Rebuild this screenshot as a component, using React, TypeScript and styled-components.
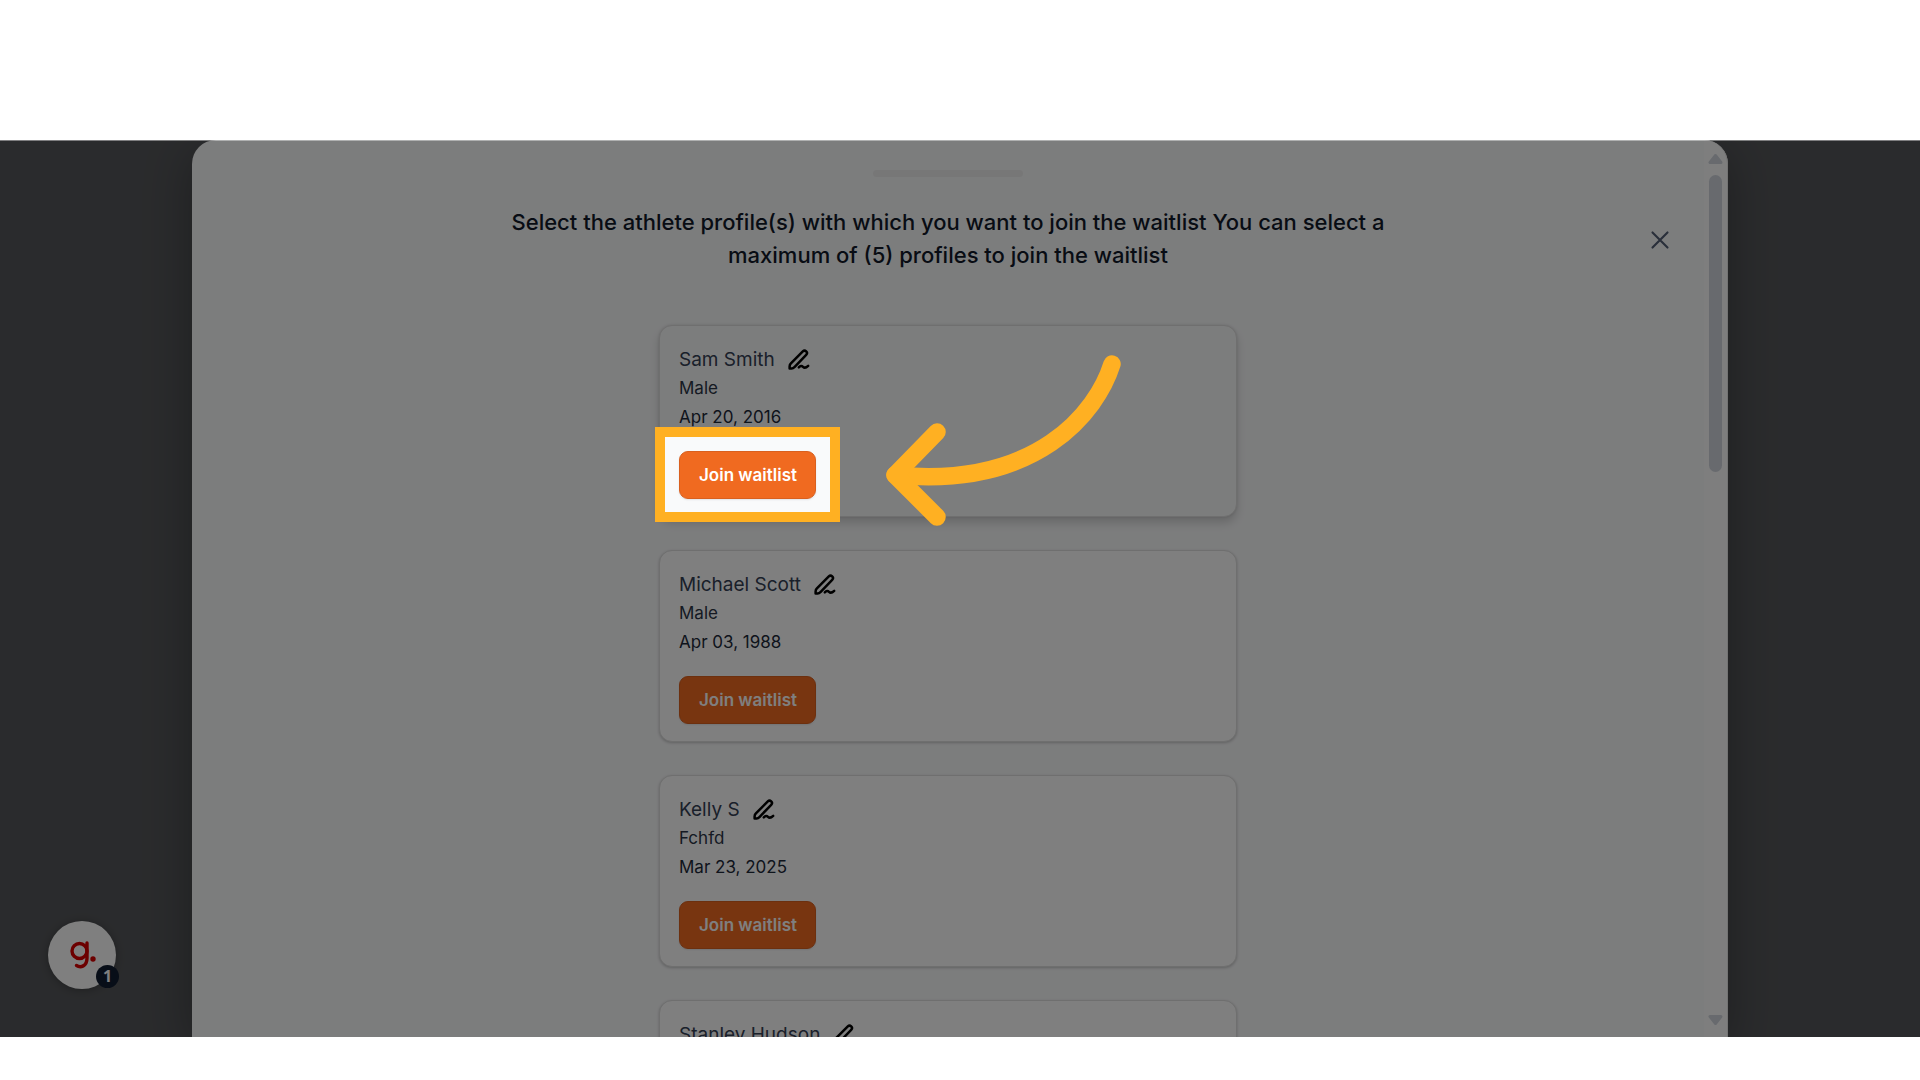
import React from "react";
import styled, { createGlobalStyle } from "styled-components";

const GlobalStyle = createGlobalStyle`
  *, *::before, *::after { box-sizing: border-box; }
  body {
    margin: 0;
    background: #ffffff;
    font-family: Inter, "Liberation Sans", sans-serif;
  }
`;

const Page = styled.div`
  display: flex;
  flex-direction: column;
  height: 100vh;
  padding: 140px 0 43px;
`;

const Stage = styled.main`
  position: relative;
  isolation: isolate;
  flex: 1;
  min-height: 0;
  display: flex;
  justify-content: center;
  overflow: hidden;
  background: #55575a;

  &::after {
    content: "";
    position: absolute;
    inset: 0 0 auto;
    z-index: 3;
    height: 1px;
    background: rgba(255, 255, 255, 0.4);
  }
`;

const Panel = styled.section`
  display: flex;
  width: 80%;
  border-radius: 24px 24px 0 0;
  background: #f9fafb;
  box-shadow: 0 10px 48px rgba(0, 0, 0, 0.3);
`;

const Content = styled.div`
  flex: 1;
  min-width: 0;
  display: flex;
  flex-direction: column;
  align-items: center;
  padding-top: 30px;
`;

const Handle = styled.div`
  flex: none;
  width: 150px;
  height: 7px;
  border-radius: 4px;
  background: #efefef;
`;

const Header = styled.header`
  align-self: stretch;
  display: grid;
  grid-template-columns: 1fr minmax(0, 920px) 1fr;
  align-items: center;
  padding: 29px 0 53px;
`;

const Title = styled.h1`
  grid-column: 2;
  margin: 0;
  color: #101828;
  font-size: 22px;
  font-weight: 500;
  line-height: 33px;
  text-align: center;
`;

const IconButton = styled.button`
  display: flex;
  padding: 0;
  border: 0;
  background: none;
  color: #000000;
  cursor: pointer;
`;

const CloseButton = styled(IconButton)`
  justify-self: end;
  margin-right: 29px;
  padding-top: 2px;
  color: #535f75;
`;

const Cards = styled.ul`
  display: flex;
  flex-direction: column;
  gap: 33px;
  width: 578px;
  margin: 0;
  padding: 0;
  list-style: none;
`;

const Card = styled.li<{ $active?: boolean }>`
  display: flex;
  flex-direction: column;
  align-items: flex-start;
  padding: 19px 19px 17px;
  border: 1px solid #dedede;
  border-radius: 13px;
  background: ${(p) => (p.$active ? "#f9fafb" : "#ffffff")};
  box-shadow: ${(p) =>
    p.$active
      ? "0 6px 10px rgba(0, 0, 0, 0.16), 0 0 3px rgba(0, 0, 0, 0.12)"
      : "0 1px 3px rgba(0, 0, 0, 0.22)"};
`;

const NameRow = styled.div`
  display: flex;
  align-items: center;
  gap: 13px;
  height: 29px;
`;

const Name = styled.h2`
  margin: 0;
  color: #344054;
  font-size: 19px;
  font-weight: 400;
  line-height: 29px;
`;

const Detail = styled.p<{ $strong?: boolean }>`
  margin: 0;
  color: ${(p) => (p.$strong ? "#1d2939" : "#2b3546")};
  font-size: 17px;
  line-height: 29px;
`;

const Action = styled.div`
  position: relative;
  margin-top: 19px;
`;

const JoinButton = styled.button`
  display: block;
  height: 48px;
  padding: 0 18px 0 19px;
  border: 1px solid #d9601f;
  border-radius: 9px;
  background: #f06a20;
  color: #ffffff;
  font: 600 17px/29px Inter, "Liberation Sans", sans-serif;
  box-shadow: 0 1px 2px rgba(16, 24, 40, 0.1);
  cursor: pointer;
`;

/* The spread shadow dims everything outside the highlighted control. */
const Spotlight = styled.div`
  position: absolute;
  inset: -24px -24px -23px;
  z-index: 1;
  border: 10px solid #ffb022;
  box-shadow: 0 0 0 3000px rgba(0, 0, 0, 0.5);
  pointer-events: none;
`;

const Arrow = styled.svg`
  position: absolute;
  top: -96px;
  left: 204px;
  z-index: 2;
  pointer-events: none;
`;

const Scrollbar = styled.div`
  flex: none;
  display: flex;
  flex-direction: column;
  align-items: center;
  width: 24px;
  padding: 13px 0 11px;
  border-right: 1px solid #e6e6e6;
  border-radius: 0 24px 0 0;
  background: #fdfdfd;
`;

const Thumb = styled.div`
  width: 13px;
  height: 34%;
  margin: 10px 0 auto;
  border-radius: 7px;
  background: #d0d5dd;
`;

const Launcher = styled.button`
  position: absolute;
  bottom: 48px;
  left: 48px;
  width: 68px;
  height: 68px;
  padding: 0;
  border: 0;
  border-radius: 50%;
  background: #ffffff;
  box-shadow: 0 1px 8px rgba(0, 0, 0, 0.3);
  cursor: pointer;
`;

const Badge = styled.span`
  position: absolute;
  right: -3px;
  bottom: 1px;
  width: 23px;
  height: 23px;
  border-radius: 50%;
  background: #101c30;
  color: #ffffff;
  font: 700 16px/22px "Open Sans", "Noto Sans", sans-serif;
  text-align: center;
`;

const EditIcon = () => (
  <svg width="22" height="22" viewBox="0 0 22 22" fill="none" stroke="currentColor" strokeWidth="2.5" strokeLinecap="round" strokeLinejoin="round" aria-hidden="true">
    <path d="M1.600 19.400v-2c0-1.300.4-2.200 1.300-3.100L14.800 2.400a2.400 2.400 0 0 1 3.400 3.400L6.700 17.800c-.9.9-1.900 1.600-3.100 1.600z" />
    <path d="M10.800 18.400c1.600-1.700 3-1.800 4.200-.6s3 1.100 5.200-1" />
  </svg>
);

const CloseIcon = () => (
  <svg width="30" height="30" viewBox="0 0 24 24" fill="none" stroke="currentColor" strokeWidth="1.700" strokeLinecap="round" aria-hidden="true">
    <path d="M6 6l12 12M18 6L6 18" />
  </svg>
);

const ScrollArrow = ({ down }: { down?: boolean }) => (
  <svg width="15" height="12" viewBox="0 0 15 12" fill="#d0d5dd" stroke="#d0d5dd" strokeWidth="3" strokeLinejoin="round" aria-hidden="true">
    <path d={down ? "M2 2.500h11L7.500 9.500z" : "M2 9.500h11L7.500 2.500z"} />
  </svg>
);

const BrandMark = () => (
  <svg width="68" height="68" viewBox="0 0 68 68" fill="none" stroke="#d90000" strokeWidth="3.400" strokeLinecap="round" aria-hidden="true">
    <circle cx="31.500" cy="30" r="7.500" />
    <path d="M39 22v15c0 8.500-6.500 10-10.500 7.500" />
    <circle cx="45" cy="38" r="2.700" fill="#d90000" stroke="none" />
  </svg>
);

type Athlete = { name: string; gender?: string; born?: string };

const athletes: Athlete[] = [
  { name: "Sam Smith", gender: "Male", born: "Apr 20, 2016" },
  { name: "Michael Scott", gender: "Male", born: "Apr 03, 1988" },
  { name: "Kelly S", gender: "Fchfd", born: "Mar 23, 2025" },
  { name: "Stanley Hudson" },
];

export default function App() {
  return (
    <Page>
      <GlobalStyle />
      <Stage>
        <Launcher type="button" aria-label="Open help">
          <BrandMark />
          <Badge>1</Badge>
        </Launcher>
        <Panel>
          <Content>
            <Handle />
            <Header>
              <Title>
                Select the athlete profile(s) with which you want to join the waitlist You can select a
                maximum of (5) profiles to join the waitlist
              </Title>
              <CloseButton type="button" aria-label="Close">
                <CloseIcon />
              </CloseButton>
            </Header>
            <Cards>
              {athletes.map((athlete, index) => (
                <Card key={athlete.name} $active={index === 0}>
                  <NameRow>
                    <Name>{athlete.name}</Name>
                    <IconButton type="button" aria-label={`Edit ${athlete.name}`}>
                      <EditIcon />
                    </IconButton>
                  </NameRow>
                  {athlete.born && (
                    <>
                      <Detail>{athlete.gender}</Detail>
                      <Detail $strong>{athlete.born}</Detail>
                      <Action>
                        <JoinButton type="button">Join waitlist</JoinButton>
                        {index === 0 && (
                          <>
                            <Spotlight />
                            <Arrow width="238" height="172" viewBox="0 0 238 172" fill="none" stroke="#ffb022" strokeWidth="17.500" strokeLinecap="round" strokeLinejoin="round" aria-hidden="true">
                              <path d="M229 9C214 57 154 134 12 120" />
                              <path d="M54 77L12 120l42 42" />
                            </Arrow>
                          </>
                        )}
                      </Action>
                    </>
                  )}
                </Card>
              ))}
            </Cards>
          </Content>
          <Scrollbar>
            <ScrollArrow />
            <Thumb />
            <ScrollArrow down />
          </Scrollbar>
        </Panel>
      </Stage>
    </Page>
  );
}
